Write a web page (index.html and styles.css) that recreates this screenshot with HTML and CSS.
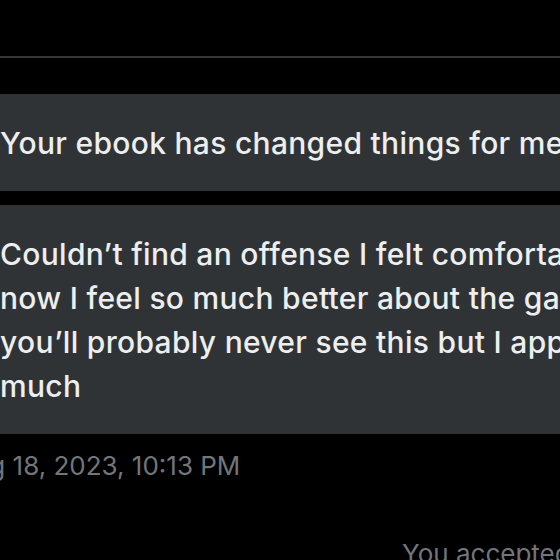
FILE: index.html
```html
<!DOCTYPE html>
<html lang="en">
<head>
    <meta charset="UTF-8">
    <meta name="viewport" content="width=device-width, initial-scale=1.0">
    <title>Messages</title>
    <link rel="stylesheet" href="styles.css">
</head>
<body>
    <div class="chat">
        <div class="divider"></div>
        <div class="message">
            <div class="bubble">Your ebook has changed things for me</div>
            <div class="bubble">Couldn’t find an offense I felt comfortable running until now<br>now I feel so much better about the game and the season<br>you’ll probably never see this but I appreciate it so<br>much</div>
            <div class="time">Aug 18, 2023, 10:13 PM</div>
        </div>
        <div class="notice">You accepted the request</div>
    </div>
</body>
</html>
```

FILE: styles.css
```css
body {
    margin: 0;
    background: #000000;
    overflow: hidden;
    font-family: Inter, "Noto Sans", sans-serif;
}
.chat {
    width: 1100px;
    margin-left: -20px;
    padding-top: 56px;
}
.divider {
    height: 2px;
    background: #343638;
    margin-bottom: 36px;
}
.message {
    display: flex;
    flex-direction: column;
    gap: 14px;
}
.bubble {
    background: #2f3336;
    color: #eceeef;
    font-size: 30px;
    font-weight: 500;
    letter-spacing: 0.3px;
    line-height: 44px;
    padding: 27px 20px 26px;
    white-space: nowrap;
}
.time {
    color: #71767b;
    font-size: 26px;
    line-height: 36px;
    text-indent: -24px;
}
.notice {
    color: #71767b;
    font-size: 26px;
    line-height: 36px;
    margin-top: 52px;
    padding-left: 422px;
    white-space: nowrap;
}
```
